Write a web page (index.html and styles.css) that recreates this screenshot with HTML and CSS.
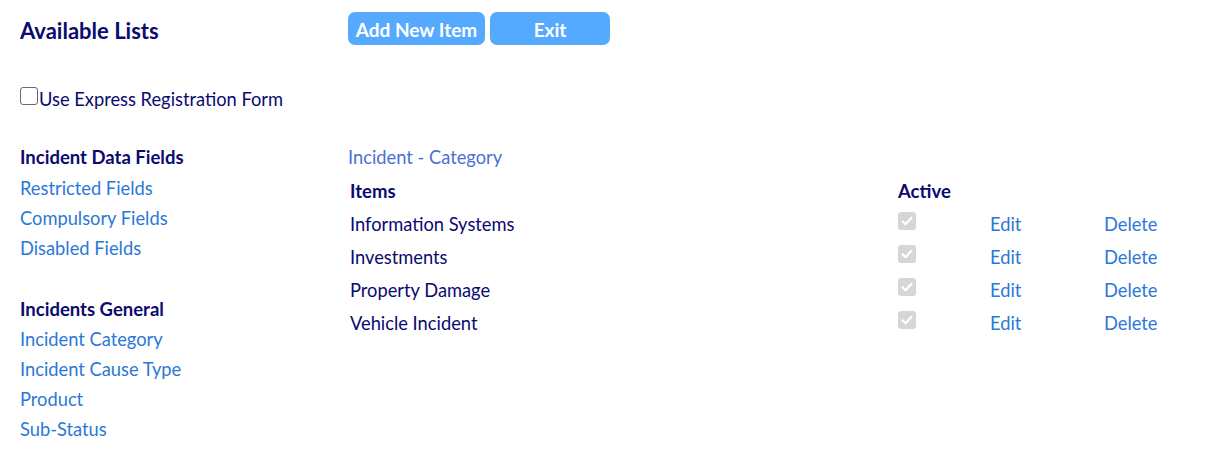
FILE: index.html
```html
<!DOCTYPE html>
<html lang="en">
<head>
<meta charset="utf-8">
<title>Available Lists</title>
<link rel="stylesheet" href="styles.css">
</head>
<body>
<div class="page">
  <div class="header">
    <h1 class="title">Available Lists</h1>
    <div class="actions">
      <button class="btn btn-add">Add New Item</button>
      <button class="btn btn-exit">Exit</button>
    </div>
  </div>

  <label class="express">
    <span class="box"></span><span>Use Express Registration Form</span>
  </label>

  <div class="main">
    <nav class="nav">
      <div class="group">
        <div class="group-title">Incident Data Fields</div>
        <a class="link" href="#">Restricted Fields</a>
        <a class="link" href="#">Compulsory Fields</a>
        <a class="link" href="#">Disabled Fields</a>
      </div>
      <div class="group">
        <div class="group-title">Incidents General</div>
        <a class="link" href="#">Incident Category</a>
        <a class="link" href="#">Incident Cause Type</a>
        <a class="link" href="#">Product</a>
        <a class="link" href="#">Sub-Status</a>
      </div>
    </nav>

    <section class="content">
      <div class="list-title">Incident - Category</div>
      <div class="table">
        <div class="th">Items</div>
        <div class="th">Active</div>
        <div class="th"></div>
        <div class="th"></div>

        <div class="td">Information Systems</div>
        <div class="td"><span class="check"><svg viewBox="0 0 18 18"><path d="M4.5 9.3 L7.6 12.3 L13.5 5.8" /></svg></span></div>
        <div class="td"><a class="link" href="#">Edit</a></div>
        <div class="td"><a class="link" href="#">Delete</a></div>

        <div class="td">Investments</div>
        <div class="td"><span class="check"><svg viewBox="0 0 18 18"><path d="M4.5 9.3 L7.6 12.3 L13.5 5.8" /></svg></span></div>
        <div class="td"><a class="link" href="#">Edit</a></div>
        <div class="td"><a class="link" href="#">Delete</a></div>

        <div class="td">Property Damage</div>
        <div class="td"><span class="check"><svg viewBox="0 0 18 18"><path d="M4.5 9.3 L7.6 12.3 L13.5 5.8" /></svg></span></div>
        <div class="td"><a class="link" href="#">Edit</a></div>
        <div class="td"><a class="link" href="#">Delete</a></div>

        <div class="td">Vehicle Incident</div>
        <div class="td"><span class="check"><svg viewBox="0 0 18 18"><path d="M4.5 9.3 L7.6 12.3 L13.5 5.8" /></svg></span></div>
        <div class="td"><a class="link" href="#">Edit</a></div>
        <div class="td"><a class="link" href="#">Delete</a></div>
      </div>
    </section>
  </div>
</div>
</body>
</html>
```

FILE: styles.css
```css
html, body {
  margin: 0;
  padding: 0;
  background: #ffffff;
}

body {
  font-family: Lato, "Open Sans", sans-serif;
  font-size: 18.3px;
  color: #0a0a70;
}

.page {
  padding: 12px 0 0 20px;
}

.header {
  display: flex;
  align-items: center;
  height: 33px;
}

.title {
  width: 328px;
  margin: 0;
  padding-top: 4px;
  font-size: 22px;
  font-weight: 700;
  color: #0a0a70;
}

.actions {
  display: flex;
  gap: 5px;
}

.btn {
  height: 33px;
  border: none;
  border-radius: 7px;
  background: #55aaff;
  color: #ffffff;
  font-family: Lato, sans-serif;
  font-size: 19px;
  font-weight: 700;
  padding: 2px 0 0;
}

.btn-add {
  width: 137px;
}

.btn-exit {
  width: 120px;
}

.express {
  display: flex;
  align-items: center;
  margin-top: 39px;
  height: 30px;
}

.box {
  width: 16px;
  height: 16px;
  border: 1px solid #6b6b6b;
  border-radius: 3px;
  margin-right: 1px;
  margin-top: -6px;
  background: #fff;
}

.main {
  display: flex;
  margin-top: 28px;
}

.nav {
  width: 328px;
  display: flex;
  flex-direction: column;
  gap: 31px;
}

.group {
  display: flex;
  flex-direction: column;
}

.group-title {
  line-height: 30px;
  margin-bottom: 1px;
  font-weight: 700;
  font-size: 18.5px;
}

.group + .group .group-title {
  margin-bottom: 0;
}

.link {
  color: #2b78d6;
  text-decoration: none;
  line-height: 30px;
}

.content {
  flex: 1;
}

.list-title {
  line-height: 30px;
  color: #4d6fd2;
}

.table {
  display: grid;
  grid-template-columns: 548px 92px 114px auto;
  grid-auto-rows: 33px;
  margin-top: 2px;
  padding-left: 2px;
}

.th, .td {
  display: flex;
  align-items: center;
}

.th {
  font-weight: 700;
  font-size: 18.5px;
}

.check {
  display: block;
  width: 18px;
  height: 18px;
  border-radius: 3px;
  background: #d6d6d6;
  margin-top: -6px;
}

.check svg {
  display: block;
  width: 18px;
  height: 18px;
  fill: none;
  stroke: #ffffff;
  stroke-width: 2.2;
  stroke-linecap: round;
  stroke-linejoin: round;
}
```
